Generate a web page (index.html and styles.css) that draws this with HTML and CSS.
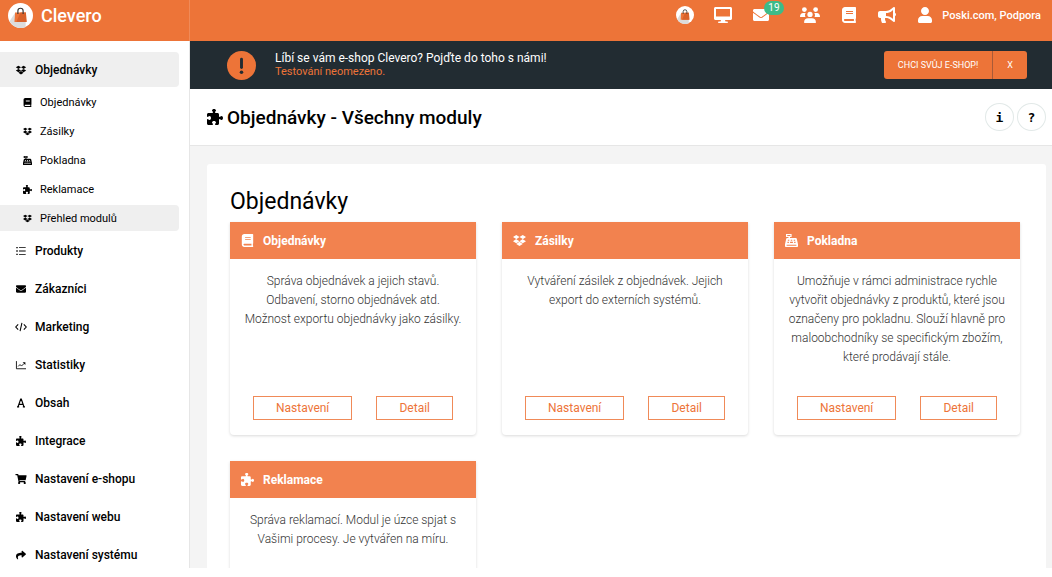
FILE: index.html
```
<!DOCTYPE html>
<html lang="cs">
<head>
  <meta charset="UTF-8">
  <meta name="viewport" content="width=device-width, initial-scale=1">
  <title>Objednávky - Všechny moduly</title>
  <link rel="stylesheet" href="styles.css">
</head>
<body>
  <!-- Icon sprite -->
  <svg class="sprite" aria-hidden="true">
    <symbol id="bag" viewBox="0 0 24 24">
      <circle cx="12" cy="12" r="12" fill="#fff"/>
      <path d="M7 9L1.500 17.500A12 12 0 0 0 17 23L17 18z" fill="#dcdcdc"/>
      <path d="M6.800 9h10.400l.6 9.200H6.200z" fill="#ed7438"/>
      <path d="M12 9h5.200l.6 9.200H8z" fill="#d9622b"/>
      <path d="M9.500 10.500V7.500a2.500 2.500 0 0 1 5 0v3" fill="none" stroke="#333" stroke-width="1.100"/>
    </symbol>
    <symbol id="puzzle" viewBox="0 0 512 512"><path d="M192 104.800c0-9.200-5.800-17.300-13.200-22.800C167.200 73.300 160 61.300 160 48c0-26.500 28.700-48 64-48s64 21.500 64 48c0 13.300-7.200 25.300-18.800 34c-7.400 5.500-13.200 13.600-13.200 22.800c0 12.800 10.400 23.200 23.200 23.200H336c26.500 0 48 21.500 48 48v56.800c0 12.800 10.400 23.200 23.200 23.200c9.200 0 17.300-5.800 22.800-13.200c8.700-11.600 20.700-18.800 34-18.800c26.500 0 48 28.700 48 64s-21.500 64-48 64c-13.300 0-25.300-7.200-34-18.800c-5.500-7.400-13.600-13.200-22.800-13.200c-12.800 0-23.200 10.400-23.200 23.200V464c0 26.500-21.500 48-48 48H279.200c-12.800 0-23.200-10.400-23.200-23.200c0-9.200 5.800-17.300 13.200-22.800c11.600-8.700 18.800-20.700 18.800-34c0-26.500-28.700-48-64-48s-64 21.500-64 48c0 13.300 7.200 25.300 18.800 34c7.400 5.500 13.200 13.600 13.200 22.800c0 12.800-10.400 23.200-23.200 23.200H48c-26.500 0-48-21.500-48-48V343.200C0 330.400 10.400 320 23.200 320c9.200 0 17.300 5.800 22.800 13.200C54.700 344.800 66.700 352 80 352c26.500 0 48-28.700 48-64s-21.500-64-48-64c-13.300 0-25.300 7.200-34 18.800C40.500 250.200 32.400 256 23.200 256C10.400 256 0 245.600 0 232.800V176c0-26.500 21.500-48 48-48H168.800c12.800 0 23.200-10.400 23.200-23.200z"/></symbol>
    <symbol id="dropbox" viewBox="0 0 528 512"><path d="M264.400 116.300l-132 84.300 132 84.300-132 84.300L0 284.100l132.300-84.300L0 116.300 132.300 32l132.100 84.300zM131.600 395.700l132-84.300 132 84.300-132 84.300-132-84.300zm132.800-111.600l132-84.300-132-83.600L395.700 32 528 116.300l-132.300 84.300L528 284.800l-132.300 84.300-131.300-85z"/></symbol>
    <symbol id="book" viewBox="0 0 448 512"><path d="M448 360V24c0-13.300-10.700-24-24-24H96C43 0 0 43 0 96v320c0 53 43 96 96 96h328c13.300 0 24-10.700 24-24v-16c0-7.500-3.500-14.300-8.900-18.700-4.200-15.400-4.200-59.300 0-74.700 5.400-4.300 8.900-11.100 8.900-18.600zM128 134c0-3.300 2.700-6 6-6h212c3.300 0 6 2.700 6 6v20c0 3.300-2.700 6-6 6H134c-3.300 0-6-2.700-6-6v-20zm0 64c0-3.300 2.700-6 6-6h212c3.300 0 6 2.700 6 6v20c0 3.300-2.700 6-6 6H134c-3.300 0-6-2.700-6-6v-20zm253.400 250H96c-17.700 0-32-14.300-32-32 0-17.600 14.400-32 32-32h285.400c-1.900 17.100-1.900 46.900 0 64z"/></symbol>
    <symbol id="register" viewBox="0 0 512 512"><path fill-rule="evenodd" d="M40 0h220v120h-64v40h220c30 0 48 18 52 44l44 196v80c0 18-14 32-32 32H32c-18 0-32-14-32-32v-80l44-196c4-26 22-44 52-44h40v-40H40zm48 40v36h124V40zM112 226h56v40h-56zm116 0h56v40h-56zm116 0h56v40h-56zM96 310h56v40H96zm104 0h112v40H200zm160 0h56v40h-56zM64 424v36h384v-36z"/></symbol>
    <symbol id="list" viewBox="0 0 512 512"><path d="M16 48h72v72H16zM16 220h72v72H16zM16 392h72v72H16zM152 62h344v44H152zM152 234h344v44H152zM152 406h344v44H152z"/></symbol>
    <symbol id="envelope" viewBox="0 0 512 512"><path d="M502.300 190.800c3.900-3.100 9.700-.2 9.700 4.700V400c0 26.500-21.500 48-48 48H48c-26.500 0-48-21.500-48-48V195.600c0-5 5.700-7.800 9.700-4.700 22.400 17.400 52.100 39.500 154.100 113.600 21.100 15.400 56.700 47.800 92.200 47.600 35.700.3 72-32.800 92.300-47.600 102-74.100 131.600-96.300 154-113.700zM256 320c23.200.4 56.600-29.200 73.400-41.400 132.700-96.300 142.800-104.700 173.400-128.700 5.800-4.500 9.200-11.500 9.200-18.900v-19c0-26.500-21.500-48-48-48H48c-26.500 0-48 21.500-48 48v19c0 7.400 3.400 14.300 9.200 18.900 30.600 23.900 40.700 32.400 173.400 128.700 16.800 12.200 50.200 41.800 73.400 41.400z"/></symbol>
    <symbol id="code" viewBox="0 0 640 512"><path d="M170 120L40 256l130 136M470 120l130 136-130 136M370 40L270 472" fill="none" stroke="currentColor" stroke-width="56"/></symbol>
    <symbol id="chart" viewBox="0 0 512 512"><path d="M22 56v392h490" fill="none" stroke="currentColor" stroke-width="44"/><path d="M110 330l95-95 75 75 130-130" fill="none" stroke="currentColor" stroke-width="44"/><path d="M340 110h140v140z"/></symbol>
    <symbol id="font" viewBox="0 0 448 512"><path d="M70 456L210 56h28l140 400M130 320h188M20 456h110M318 456h110" fill="none" stroke="currentColor" stroke-width="64"/></symbol>
    <symbol id="cart" viewBox="0 0 576 512"><path d="M528.120 301.319l47.273-208C578.806 78.301 567.391 64 551.990 64H159.208l-9.166-44.810C147.758 8.021 137.930 0 126.529 0H24C10.745 0 0 10.745 0 24v16c0 13.255 10.745 24 24 24h69.883l70.248 343.435C147.325 417.100 136 435.222 136 456c0 30.928 25.072 56 56 56s56-25.072 56-56c0-15.674-6.447-29.835-16.824-40h209.647C430.447 426.165 424 440.326 424 456c0 30.928 25.072 56 56 56s56-25.072 56-56c0-22.172-12.888-41.332-31.579-50.405l5.517-24.276c3.413-15.018-8.002-29.319-23.403-29.319H218.117l-6.545-32h293.145c11.206 0 20.920-7.754 23.403-18.681z"/></symbol>
    <symbol id="share" viewBox="0 0 512 512"><path d="M503.691 189.836L327.687 37.851C312.281 24.546 288 35.347 288 56.015v80.053C127.371 137.907 0 170.100 0 322.326c0 61.441 39.581 122.309 83.333 154.132 13.653 9.931 33.111-2.533 28.077-18.631C66.066 312.814 132.917 274.316 288 272.085V360c0 20.700 24.300 31.453 39.687 18.164l176.004-152c11.071-9.562 11.086-26.753 0-36.328z"/></symbol>
    <symbol id="desktop" viewBox="0 0 576 512"><path fill-rule="evenodd" d="M48 0h480c26 0 48 22 48 48v320c0 26-22 48-48 48H352l16 48h56c13 0 24 11 24 24s-11 24-24 24H152c-13 0-24-11-24-24s11-24 24-24h56l16-48H48c-26 0-48-22-48-48V48C0 22 22 0 48 0zm16 64v240h448V64z"/></symbol>
    <symbol id="users" viewBox="0 0 640 512"><circle cx="140" cy="80" r="76"/><circle cx="500" cy="80" r="76"/><path d="M0 300c0-62 40-112 100-112h84c-30 40-32 88-8 134H20c-12 0-20-10-20-22zM640 300c0-62-40-112-100-112h-84c30 40 32 88 8 134h156c12 0 20-10 20-22z"/><circle cx="320" cy="236" r="84"/><path d="M130 484c0-70 56-124 126-124h128c70 0 126 54 126 124 0 16-12 28-28 28H158c-16 0-28-12-28-28z"/></symbol>
    <symbol id="bullhorn" viewBox="0 0 576 512"><path d="M576 240c0-23.630-12.950-44.040-32-55.120V32.010C544 23.260 537.020 0 512 0c-7.120 0-14.190 2.380-19.980 7.020l-85.030 68.030C364.280 109.190 310.660 128 256 128H64c-35.350 0-64 28.650-64 64v96c0 35.350 28.650 64 64 64h33.700c-1.390 10.480-2.180 21.140-2.180 32 0 39.770 9.260 77.350 25.560 110.940 5.190 10.690 16.520 17.060 28.400 17.060h74.280c26.050 0 41.690-29.840 25.900-50.560-16.400-21.520-26.150-48.360-26.150-77.440 0-11.110 1.620-21.790 4.410-32H256c54.660 0 108.280 18.810 150.980 52.950l85.030 68.030a32.023 32.023 0 0 0 19.980 7.020c24.920 0 32-22.780 32-32V295.130C563.050 284.040 576 263.630 576 240zm-96 141.420l-33.050-26.440C392.950 311.780 325.120 288 256 288v-96c69.120 0 136.950-23.780 190.950-66.980L480 98.580v282.840z"/></symbol>
    <symbol id="user" viewBox="0 0 448 512"><path d="M224 256c70.700 0 128-57.300 128-128S294.700 0 224 0 96 57.300 96 128s57.300 128 128 128zm89.600 32h-179.200C60.200 288 0 348.200 0 422.400V464c0 26.500 21.500 48 48 48h352c26.500 0 48-21.500 48-48v-41.600c0-74.200-60.200-134.400-134.400-134.400z"/></symbol>
    <symbol id="alert" viewBox="0 0 28 28"><circle cx="14" cy="14" r="14" fill="#ed7438"/><path d="M14 8v8" stroke="#222c32" stroke-width="2.800" stroke-linecap="round"/><circle cx="14" cy="20.500" r="1.700" fill="#222c32"/></symbol>
  </svg>

  <div class="app">
    <header class="header">
      <a href="#" class="brand">
        <svg class="brand-logo"><use href="#bag"/></svg>
        <span>Clevero</span>
      </a>
      <nav class="toolbar">
        <a href="#" aria-label="E-shop"><svg class="icon-bag"><use href="#bag"/></svg></a>
        <a href="#" aria-label="Náhled"><svg><use href="#desktop"/></svg></a>
        <a href="#" class="messages" aria-label="Zprávy"><svg><use href="#envelope"/></svg><span class="badge">19</span></a>
        <a href="#" aria-label="Komunita"><svg class="icon-users"><use href="#users"/></svg></a>
        <a href="#" aria-label="Nápověda"><svg><use href="#book"/></svg></a>
        <a href="#" aria-label="Novinky"><svg><use href="#bullhorn"/></svg></a>
        <a href="#" class="account"><svg><use href="#user"/></svg><span>Poski.com, Podpora</span></a>
      </nav>
    </header>

    <div class="layout">
      <!-- Side menu -->
      <nav class="sidebar">
        <a href="#" class="nav-item active"><svg><use href="#dropbox"/></svg>Objednávky</a>
        <div class="submenu">
          <a href="#" class="sub-item"><svg><use href="#book"/></svg>Objednávky</a>
          <a href="#" class="sub-item"><svg><use href="#dropbox"/></svg>Zásilky</a>
          <a href="#" class="sub-item"><svg><use href="#register"/></svg>Pokladna</a>
          <a href="#" class="sub-item"><svg><use href="#puzzle"/></svg>Reklamace</a>
          <a href="#" class="sub-item active"><svg><use href="#dropbox"/></svg>Přehled modulů</a>
        </div>
        <a href="#" class="nav-item"><svg><use href="#list"/></svg>Produkty</a>
        <a href="#" class="nav-item"><svg><use href="#envelope"/></svg>Zákazníci</a>
        <a href="#" class="nav-item"><svg><use href="#code"/></svg>Marketing</a>
        <a href="#" class="nav-item"><svg><use href="#chart"/></svg>Statistiky</a>
        <a href="#" class="nav-item"><svg><use href="#font"/></svg>Obsah</a>
        <a href="#" class="nav-item"><svg><use href="#puzzle"/></svg>Integrace</a>
        <a href="#" class="nav-item"><svg><use href="#cart"/></svg>Nastavení e-shopu</a>
        <a href="#" class="nav-item"><svg><use href="#puzzle"/></svg>Nastavení webu</a>
        <a href="#" class="nav-item"><svg><use href="#share"/></svg>Nastavení systému</a>
      </nav>

      <main class="main">
        <!-- Trial banner -->
        <div class="banner">
          <svg class="banner-icon"><use href="#alert"/></svg>
          <div class="banner-text">
            <div>Líbí se vám e-shop Clevero? Pojďte do toho s námi!</div>
            <div class="banner-note">Testování neomezeno.</div>
          </div>
          <div class="banner-buttons">
            <button type="button">CHCI SVŮJ E-SHOP!</button>
            <button type="button" class="banner-close">X</button>
          </div>
        </div>

        <div class="title-bar">
          <svg class="title-icon"><use href="#puzzle"/></svg>
          <h1>Objednávky - Všechny moduly</h1>
          <div class="help-buttons">
            <button type="button">i</button>
            <button type="button">?</button>
          </div>
        </div>

        <div class="content">
          <section class="panel">
            <h2>Objednávky</h2>
            <div class="cards">
              <article class="card">
                <h3><svg><use href="#book"/></svg>Objednávky</h3>
                <p>Správa objednávek a jejich stavů. Odbavení, storno objednávek atd. Možnost exportu objednávky jako zásilky.</p>
                <div class="card-actions">
                  <button type="button">Nastavení</button>
                  <button type="button">Detail</button>
                </div>
              </article>
              <article class="card">
                <h3><svg><use href="#dropbox"/></svg>Zásilky</h3>
                <p>Vytváření zásilek z objednávek. Jejich export do externích systémů.</p>
                <div class="card-actions">
                  <button type="button">Nastavení</button>
                  <button type="button">Detail</button>
                </div>
              </article>
              <article class="card">
                <h3><svg><use href="#register"/></svg>Pokladna</h3>
                <p>Umožňuje v rámci administrace rychle vytvořit objednávky z produktů, které jsou označeny pro pokladnu. Slouží hlavně pro maloobchodníky se specifickým zbožím, které prodávají stále.</p>
                <div class="card-actions">
                  <button type="button">Nastavení</button>
                  <button type="button">Detail</button>
                </div>
              </article>
              <article class="card">
                <h3><svg><use href="#puzzle"/></svg>Reklamace</h3>
                <p>Správa reklamací. Modul je úzce spjat s Vašimi procesy. Je vytvářen na míru.</p>
              </article>
            </div>
          </section>
        </div>
      </main>
    </div>
  </div>
</body>
</html>
```
FILE: styles.css
```
* {
  box-sizing: border-box;
}

body {
  margin: 0;
  height: 100vh;
  padding-bottom: 9px;
  overflow: hidden;
  font-family: Roboto, sans-serif;
  font-size: 12px;
  color: #000;
  background-color: #fff;
}

a {
  color: inherit;
  text-decoration: none;
}

svg {
  fill: currentColor;
  flex-shrink: 0;
}

button {
  font-family: inherit;
  cursor: pointer;
}

.sprite {
  display: none;
}

.app {
  height: 100%;
  display: flex;
  flex-direction: column;
  overflow: hidden;
}

/* Header */
.header {
  height: 41px;
  flex-shrink: 0;
  display: flex;
  align-items: stretch;
  justify-content: space-between;
  background-color: #ed7438;
  color: #fff;
}

.brand {
  width: 190px;
  padding: 0 8px 11px;
  display: flex;
  align-items: center;
  gap: 8px;
  border-right: 1px solid #f08a58;
  font-size: 18px;
  font-weight: 500;
}

.brand-logo {
  width: 25px;
  height: 25px;
}

.toolbar {
  display: flex;
  align-items: center;
  gap: 20px;
  padding: 0 11px 11px 0;
}

.toolbar a {
  display: flex;
  align-items: center;
}

.toolbar svg {
  width: 18px;
  height: 16px;
}

.toolbar .icon-bag {
  width: 18px;
  height: 18px;
}

.toolbar .icon-users {
  width: 20px;
}

.messages {
  position: relative;
  margin-right: 10px;
}

.badge {
  position: absolute;
  top: -6px;
  left: 12px;
  padding: 0 4px;
  border-radius: 7px;
  background-color: #3dbb88;
  font-size: 10px;
  line-height: 14px;
}

.toolbar .account {
  gap: 8px;
  font-size: 11px;
  font-weight: 500;
}

/* Side menu */
.layout {
  flex: 1;
  min-height: 0;
  display: flex;
}

.sidebar {
  width: 190px;
  flex-shrink: 0;
  padding: 11px 10px 0 0;
  border-right: 1px solid #e6e6e6;
  overflow: hidden;
}

.nav-item {
  height: 35px;
  margin-bottom: 3px;
  padding-left: 15px;
  display: flex;
  align-items: center;
  gap: 8px;
  border-radius: 0 4px 4px 0;
  font-weight: 500;
}

.nav-item svg {
  width: 12px;
  height: 10px;
}

.nav-item.active,
.sub-item.active {
  background-color: #efefef;
}

.submenu {
  margin: -1px 0;
}

.sub-item {
  height: 26px;
  margin-bottom: 3px;
  padding-left: 23px;
  display: flex;
  align-items: center;
  gap: 8px;
  border-radius: 0 4px 4px 0;
  font-size: 11px;
}

.sub-item svg {
  width: 9px;
  height: 9px;
}

/* Main column */
.main {
  flex: 1;
  min-width: 0;
  display: flex;
  flex-direction: column;
  background-color: #f4f4f4;
}

.banner {
  height: 48px;
  flex-shrink: 0;
  display: flex;
  align-items: center;
  gap: 19px;
  padding: 0 25px 0 37px;
  background-color: #222c32;
  color: #fff;
}

.banner-icon {
  width: 29px;
  height: 29px;
}

.banner-text {
  line-height: 14px;
}

.banner-note {
  color: #ed7438;
  font-size: 11px;
}

.banner-buttons {
  margin-left: auto;
  display: flex;
}

.banner-buttons button {
  height: 28px;
  padding: 0 14px;
  border: none;
  border-radius: 3px 0 0 3px;
  background-color: #ed7438;
  color: #fff;
  font-size: 9px;
}

.banner-buttons .banner-close {
  border-left: 1px solid #a85a38;
  border-radius: 0 3px 3px 0;
}

.title-bar {
  height: 57px;
  flex-shrink: 0;
  display: flex;
  align-items: center;
  gap: 4px;
  padding: 0 6px 0 17px;
  border-bottom: 1px solid #e6e6e6;
  background-color: #fff;
}

.title-icon {
  width: 16px;
  height: 16px;
}

.title-bar h1 {
  margin: 0;
  font-size: 19px;
  font-weight: 500;
}

.help-buttons {
  margin-left: auto;
  display: flex;
  gap: 3px;
}

.help-buttons button {
  width: 29px;
  height: 28px;
  padding: 0;
  border: 1px solid #e2e9e8;
  border-radius: 50%;
  background-color: #fff;
  font-family: "DejaVu Sans Mono", monospace;
  font-size: 13px;
  font-weight: bold;
}

/* Module cards */
.content {
  flex: 1;
  min-height: 0;
  padding: 18px 6px 0 17px;
}

.panel {
  min-height: 100%;
  padding: 24px 26px 26px 23px;
  border-radius: 3px;
  background-color: #fff;
}

.panel h2 {
  margin: 0 0 6px;
  font-size: 23px;
  font-weight: 400;
  line-height: 28px;
}

.cards {
  display: grid;
  grid-template-columns: repeat(3, 1fr);
  gap: 26px;
}

.card {
  min-height: 213px;
  display: flex;
  flex-direction: column;
  border-radius: 0 0 4px 4px;
  box-shadow: 0 1px 3px rgba(0, 0, 0, 0.15);
}

.card h3 {
  height: 37px;
  margin: 0;
  padding-left: 11px;
  display: flex;
  align-items: center;
  gap: 9px;
  background-color: #f2824f;
  color: #fff;
  font-size: 12px;
  font-weight: 700;
}

.card h3 svg {
  width: 13px;
  height: 13px;
}

.card p {
  margin: 13px 12px;
  color: #333;
  font-weight: 300;
  line-height: 19px;
  text-align: center;
}

.card-actions {
  margin-top: auto;
  padding: 0 23px 15px;
  display: flex;
  justify-content: space-between;
}

.card-actions button {
  height: 24px;
  padding: 0 22px;
  border: 1px solid #f08a58;
  background-color: #fff;
  color: #ed7438;
  font-size: 12px;
}
```
